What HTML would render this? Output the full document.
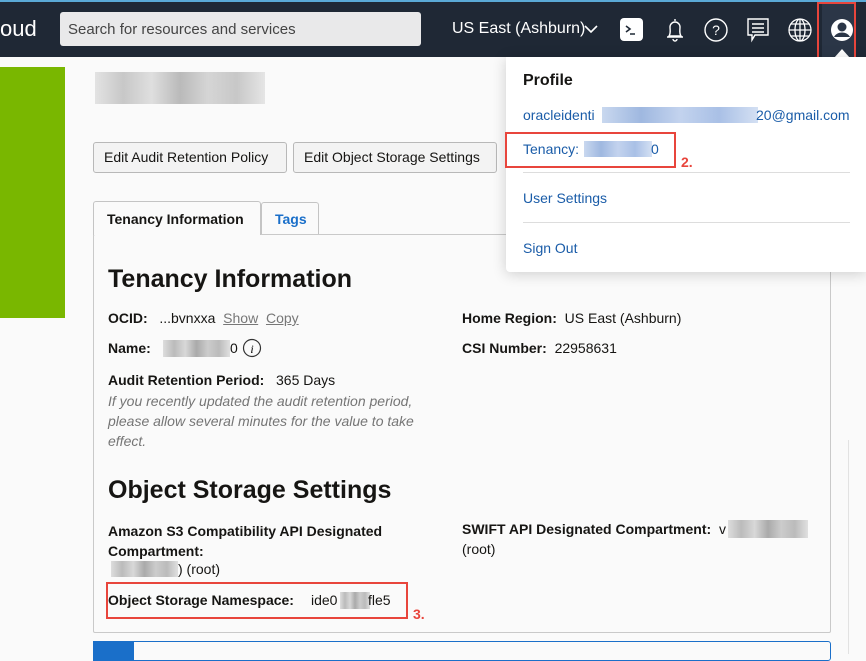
<!DOCTYPE html>
<html><head><meta charset="utf-8"><style>
*{margin:0;padding:0;box-sizing:border-box}
body{width:866px;height:654px;overflow:hidden;background:#fafafa;font-family:"Liberation Sans",Arial,sans-serif;position:relative;color:#161513}
.a{position:absolute}
.hdr{left:0;top:0;width:866px;height:57px;background:#1f2835;border-top:2px solid #5aa9d6}
.blur{background:linear-gradient(90deg,#ddd,#bbb,#d8d8d8,#aaa,#ccc,#bbb,#e0e0e0);}
.bblur{background:linear-gradient(90deg,#c9d8ef,#9fb8e0,#c3d3ee,#a9c0e6,#d4e0f3);}
.btn{top:142px;height:31px;border:1px solid #b8b8b8;border-radius:3px;background:#f3f3f3;font-size:14px;line-height:29px;padding:0 10px;color:#161513}
.lbl{font-weight:bold;font-size:14px}
.t{font-size:14px}
.red{border:2px solid #e8453c}
.rn{color:#e8453c;font-weight:bold;font-size:14px}
.lnk{color:#1a5ca8;font-size:14px}
</style></head><body>
<div class="a hdr"></div>
<div class="a" style="left:0;top:16px;color:#fff;font-size:22px">oud</div>
<div class="a" style="left:60px;top:12px;width:361px;height:34px;background:#e9e9ea;border-radius:3px;font-size:15px;color:#444;padding:9px 8px">Search for resources and services</div>
<div class="a" style="left:452px;top:20px;color:#fff;font-size:16px">US East (Ashburn)</div>
<svg class="a" style="left:583px;top:22px" width="16" height="14"><path d="M2 4l6 6 6-6" stroke="#fff" stroke-width="1.6" fill="none"/></svg>
<div class="a" style="left:620px;top:18px;width:23px;height:23px;background:#fff;border-radius:4px"></div>
<svg class="a" style="left:620px;top:18px" width="23" height="23"><path d="M6 8l4 3-4 3M10 16h5" stroke="#1f2835" stroke-width="1.6" fill="none"/></svg>
<svg class="a" style="left:662px;top:16px" width="26" height="28" fill="none" stroke="#fff" stroke-width="1.4"><path d="M13 3v2M7 20c2-3 1-6 1-9a5 5 0 0 1 10 0c0 3-1 6 1 9zM5 21h16M11 23a2 2 0 0 0 4 0"/></svg>
<svg class="a" style="left:703px;top:17px" width="26" height="26" fill="none" stroke="#fff" stroke-width="1.4"><circle cx="13" cy="13" r="11"/><text x="13" y="18" fill="#fff" stroke="none" font-size="14" text-anchor="middle" font-family="Liberation Sans">?</text></svg>
<svg class="a" style="left:745px;top:16px" width="26" height="28" fill="none" stroke="#fff" stroke-width="1.4"><path d="M3 3h20v16H10l-3 5v-5H3z M7 8h12M7 12h12M7 16h12"/></svg>
<svg class="a" style="left:787px;top:17px" width="26" height="26" fill="none" stroke="#fff" stroke-width="1.3"><circle cx="13" cy="13" r="11"/><ellipse cx="13" cy="13" rx="5" ry="11"/><path d="M2 13h22M4 7h18M4 19h18M13 2v22"/></svg>
<div class="a" style="left:822px;top:2px;width:34px;height:55px;background:#2b3647"></div>
<svg class="a" style="left:829px;top:17px" width="26" height="26"><circle cx="13" cy="13" r="11" fill="#fff"/><circle cx="13" cy="10" r="4.5" fill="#2b3647"/><path d="M5 20c3-6 13-6 16 0" fill="#2b3647"/></svg>
<svg class="a" style="left:834px;top:48px" width="16" height="10"><path d="M0 10L8 1l8 9z" fill="#fff"/></svg>
<div class="a red" style="left:817px;top:2px;width:39px;height:58px"></div>
<div class="a rn" style="left:806px;top:58px">1.</div>

<div class="a" style="left:0;top:67px;width:65px;height:251px;background:#79b700"></div>
<div class="a blur" style="left:95px;top:72px;width:170px;height:32px;opacity:.8"></div>
<div class="a btn" style="left:93px;width:194px">Edit Audit Retention Policy</div>
<div class="a btn" style="left:293px;width:204px">Edit Object Storage Settings</div>

<div class="a" style="left:93px;top:234px;width:738px;height:399px;border:1px solid #c9c9c9;border-radius:2px;background:#fafafa"></div>
<div class="a" style="left:93px;top:201px;width:168px;height:34px;border:1px solid #c4c4c4;border-bottom:none;background:#fafafa;font-weight:bold;font-size:14px;padding:9px 0 0 13px;border-radius:3px 3px 0 0">Tenancy Information</div>
<div class="a" style="left:261px;top:202px;width:58px;height:32px;border:1px solid #c4c4c4;border-bottom:none;font-weight:bold;font-size:14px;padding:8px 0 0 13px;color:#1a6fc9;border-radius:3px 3px 0 0">Tags</div>
<div class="a" style="left:108px;top:265px;font-size:25px;font-weight:bold">Tenancy Information</div>
<div class="a" style="left:108px;top:310px"><span class="lbl">OCID:</span><span class="t">&nbsp;&nbsp;&nbsp;...bvnxxa&nbsp;&nbsp;<u style="color:#777">Show</u>&nbsp;&nbsp;<u style="color:#777">Copy</u></span></div>
<div class="a" style="left:108px;top:340px"><span class="lbl">Name:</span></div>
<div class="a blur" style="left:163px;top:340px;width:67px;height:17px"></div>
<div class="a t" style="left:230px;top:340px">0</div>
<svg class="a" style="left:242px;top:338px" width="20" height="20"><circle cx="10" cy="10" r="8.5" fill="none" stroke="#333" stroke-width="1.2"/><text x="10" y="15" font-size="12" font-style="italic" text-anchor="middle" font-family="Liberation Serif">i</text></svg>
<div class="a" style="left:108px;top:372px"><span class="lbl">Audit Retention Period:</span><span class="t">&nbsp;&nbsp;&nbsp;365 Days</span></div>
<div class="a" style="left:108px;top:391px;font-size:14px;font-style:italic;color:#757575;line-height:20px;width:340px">If you recently updated the audit retention period, please allow several minutes for the value to take effect.</div>
<div class="a" style="left:462px;top:310px"><span class="lbl">Home Region:</span><span class="t">&nbsp;&nbsp;US East (Ashburn)</span></div>
<div class="a" style="left:462px;top:340px"><span class="lbl">CSI Number:</span><span class="t">&nbsp;&nbsp;22958631</span></div>
<div class="a" style="left:108px;top:476px;font-size:25px;font-weight:bold">Object Storage Settings</div>
<div class="a lbl" style="left:108px;top:521px;width:320px;line-height:20px">Amazon S3 Compatibility API Designated Compartment:</div>
<div class="a blur" style="left:111px;top:561px;width:67px;height:16px"></div>
<div class="a t" style="left:178px;top:561px">) (root)</div>
<div class="a" style="left:462px;top:521px"><span class="lbl">SWIFT API Designated Compartment:</span><span class="t">&nbsp;&nbsp;v</span></div>
<div class="a blur" style="left:728px;top:520px;width:80px;height:18px"></div>
<div class="a t" style="left:462px;top:541px">(root)</div>
<div class="a" style="left:108px;top:592px"><span class="lbl">Object Storage Namespace:</span></div>
<div class="a t" style="left:311px;top:592px">ide0</div>
<div class="a blur" style="left:340px;top:592px;width:30px;height:17px"></div>
<div class="a t" style="left:368px;top:592px">fle5</div>
<div class="a red" style="left:106px;top:582px;width:302px;height:37px"></div>
<div class="a rn" style="left:413px;top:606px">3.</div>
<div class="a" style="left:93px;top:641px;width:738px;height:20px;border:1px solid #1a6fc9;border-radius:3px"></div>
<div class="a" style="left:93px;top:641px;width:41px;height:20px;background:#1a6fc9"></div>
<div class="a" style="left:848px;top:440px;width:1px;height:214px;background:#e2e2e2"></div>

<div class="a" style="left:506px;top:57px;width:360px;height:215px;background:#fff;box-shadow:0 2px 14px rgba(0,0,0,.18);border-radius:0 0 0 4px"></div>
<div class="a" style="left:523px;top:72px;font-size:16px;font-weight:bold">Profile</div>
<div class="a lnk" style="left:523px;top:107px">oracleidenti</div>
<div class="a bblur" style="left:602px;top:107px;width:156px;height:16px"></div>
<div class="a lnk" style="left:756px;top:107px">20@gmail.com</div>
<div class="a lnk" style="left:523px;top:141px">Tenancy:</div>
<div class="a bblur" style="left:584px;top:141px;width:68px;height:16px"></div>
<div class="a lnk" style="left:651px;top:141px">0</div>
<div class="a red" style="left:505px;top:132px;width:171px;height:36px"></div>
<div class="a rn" style="left:681px;top:154px">2.</div>
<div class="a" style="left:523px;top:172px;width:327px;height:1px;background:#ddd"></div>
<div class="a lnk" style="left:523px;top:190px">User Settings</div>
<div class="a" style="left:523px;top:222px;width:327px;height:1px;background:#ddd"></div>
<div class="a lnk" style="left:523px;top:240px">Sign Out</div>
</body></html>
